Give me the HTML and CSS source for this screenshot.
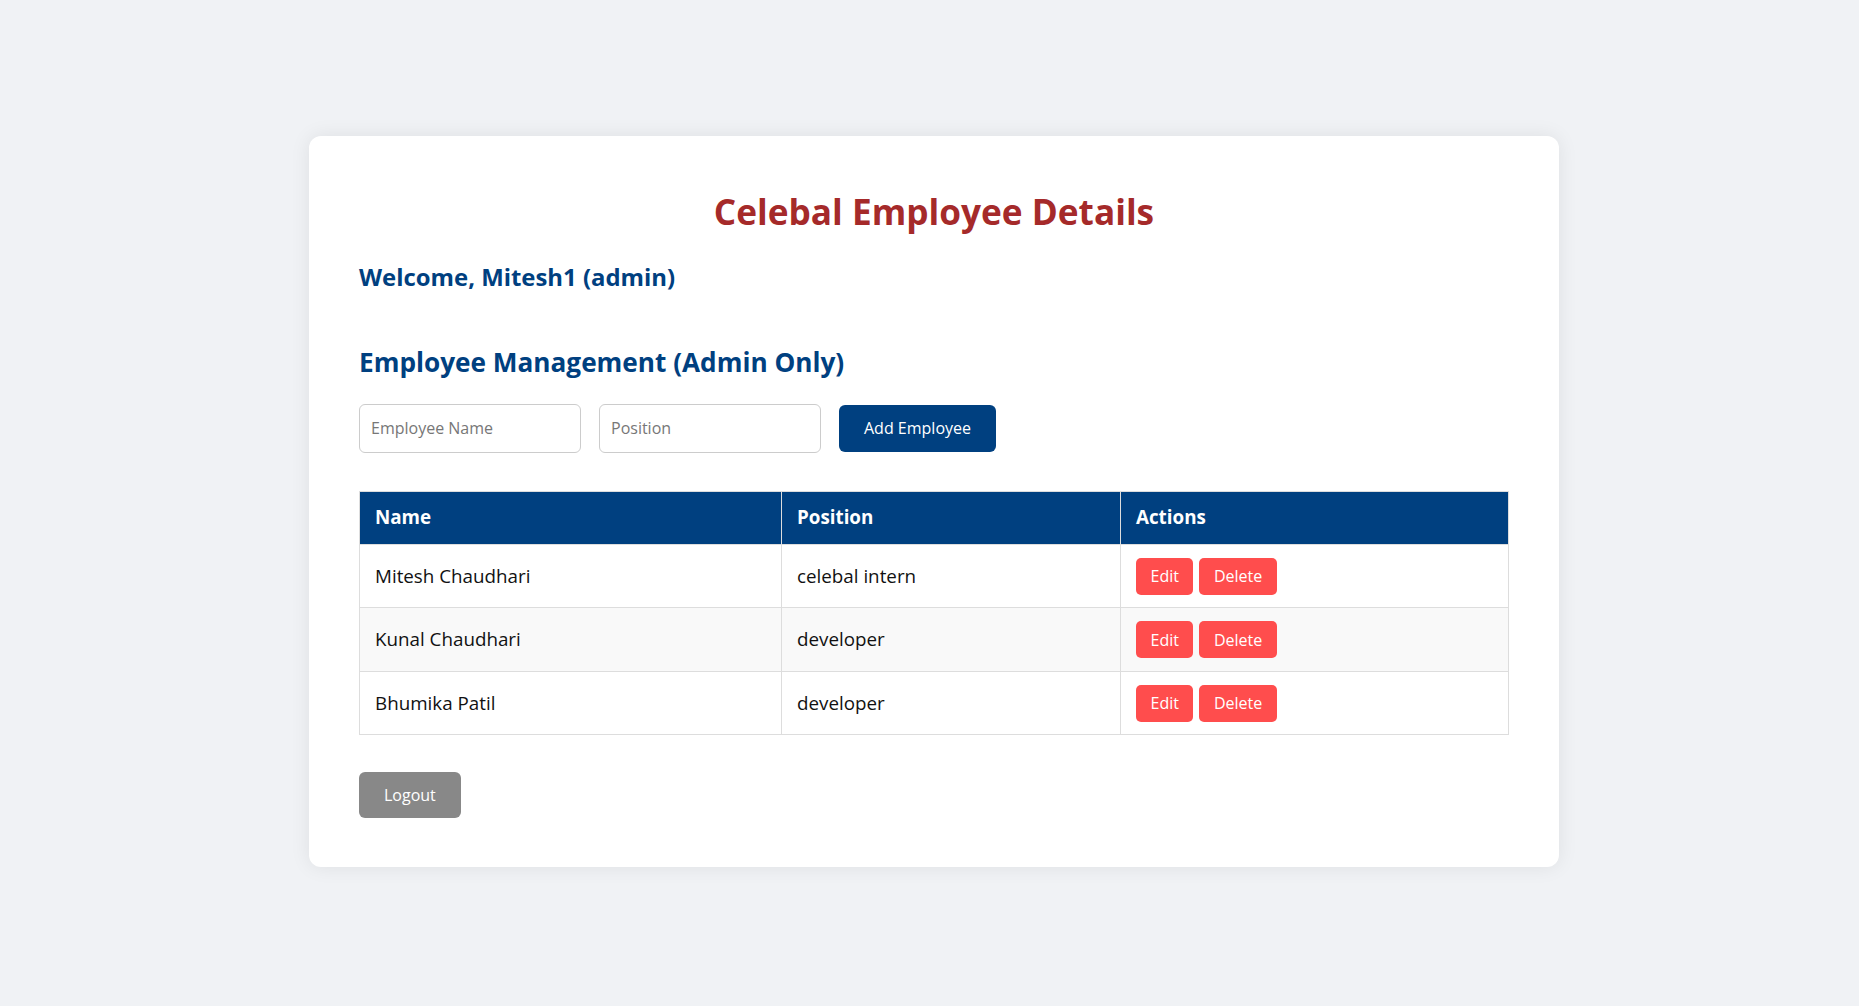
FILE: index.html
```html
<!DOCTYPE html>
<html lang="en">
<head>
<meta charset="utf-8">
<title>Celebal Employee Details</title>
<link rel="stylesheet" href="styles.css">
</head>
<body>
<div class="card">
  <h1 class="title">Celebal Employee Details</h1>
  <h2 class="welcome">Welcome, Mitesh1 (admin)</h2>
  <h2 class="section">Employee Management (Admin Only)</h2>
  <form class="add-form">
    <input class="field" type="text" placeholder="Employee Name">
    <input class="field" type="text" placeholder="Position">
    <button class="btn btn-primary" type="button">Add Employee</button>
  </form>
  <table class="emp-table">
    <thead>
      <tr><th class="col-name">Name</th><th class="col-pos">Position</th><th>Actions</th></tr>
    </thead>
    <tbody>
      <tr><td>Mitesh Chaudhari</td><td>celebal intern</td><td><div class="actions"><button class="btn-small">Edit</button><button class="btn-small">Delete</button></div></td></tr>
      <tr><td>Kunal Chaudhari</td><td>developer</td><td><div class="actions"><button class="btn-small">Edit</button><button class="btn-small">Delete</button></div></td></tr>
      <tr><td>Bhumika Patil</td><td>developer</td><td><div class="actions"><button class="btn-small">Edit</button><button class="btn-small">Delete</button></div></td></tr>
    </tbody>
  </table>
  <button class="btn btn-logout" type="button">Logout</button>
</div>
</body>
</html>
```
FILE: styles.css
```css
* { box-sizing: border-box; }
html, body { margin: 0; }
body {
  min-height: 100vh;
  background: #f0f2f5;
  font-family: "Open Sans", "Noto Sans", sans-serif;
  color: #111;
  display: flex;
  justify-content: center;
  align-items: center;
  padding: 0 0 3px 9px;
}
.card {
  width: 1250px;
  background: #fff;
  border-radius: 12px;
  box-shadow: 0 0 20px rgba(0, 0, 0, 0.08);
  padding: 50px 50px 49px 50px;
}
.title {
  margin: 1px 0 0;
  text-align: center;
  color: #a52a2a;
  font-size: 35.2px;
  line-height: 48px;
  font-weight: 700;
}
.welcome {
  margin: 26px 0 0;
  color: #004080;
  font-size: 23.9px;
  line-height: 32px;
  font-weight: 700;
}
.section {
  margin: 51px 0 0;
  color: #004080;
  font-size: 26.2px;
  line-height: 36px;
  font-weight: 700;
}
.add-form {
  margin-top: 24px;
  display: flex;
  align-items: center;
  height: 49px;
}
.field {
  width: 222px;
  height: 49px;
  padding: 0 11px;
  border: 1px solid #ccc;
  border-radius: 6px;
  font-family: inherit;
  font-size: 16px;
  color: #111;
  margin-right: 18px;
  background: #fff;
}
.field::placeholder { color: #777; }
.btn {
  border: none;
  border-radius: 6px;
  font-family: inherit;
  font-size: 16px;
  color: #fff;
  height: 47px;
  padding: 0 25px;
  cursor: pointer;
}
.btn-primary { background: #004080; }
.emp-table {
  margin-top: 38px;
  width: 100%;
  border-collapse: collapse;
  font-size: 18.8px;
  line-height: 25px;
}
.emp-table th, .emp-table td {
  border: 1px solid #ddd;
  padding: 13px 15px;
  text-align: left;
}
.emp-table th {
  background: #004080;
  color: #fff;
  font-weight: 700;
  padding-top: 13.5px;
  padding-bottom: 13.5px;
}
.col-name { width: 422px; }
.col-pos { width: 339px; }
.emp-table tbody tr:nth-child(even) { background: #f9f9f9; }
.emp-table td { padding-top: 13px; padding-bottom: 12.5px; }
.actions { display: flex; gap: 6px; }
.btn-small {
  background: #ff4d4d;
  color: #fff;
  border: none;
  border-radius: 5px;
  font-family: inherit;
  font-size: 16px;
  height: 37px;
  padding: 0 14.5px;
  cursor: pointer;
}
.btn-logout {
  display: block;
  margin-top: 37px;
  background: #888;
  height: 46px;
}
```
